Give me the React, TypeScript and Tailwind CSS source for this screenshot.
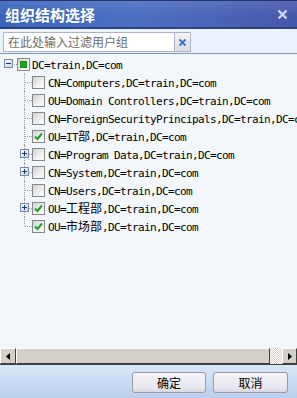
import React from 'react';

type Node = {
  label: string;
  state: 'none' | 'checked' | 'partial';
  expander?: 'plus' | 'minus';
};

const root: Node = { label: 'DC=train,DC=com', state: 'partial', expander: 'minus' };

const children: Node[] = [
  { label: 'CN=Computers,DC=train,DC=com', state: 'none' },
  { label: 'OU=Domain Controllers,DC=train,DC=com', state: 'none' },
  { label: 'CN=ForeignSecurityPrincipals,DC=train,DC=com', state: 'none' },
  { label: 'OU=IT部,DC=train,DC=com', state: 'checked' },
  { label: 'CN=Program Data,DC=train,DC=com', state: 'none', expander: 'plus' },
  { label: 'CN=System,DC=train,DC=com', state: 'none', expander: 'plus' },
  { label: 'CN=Users,DC=train,DC=com', state: 'none' },
  { label: 'OU=工程部,DC=train,DC=com', state: 'checked', expander: 'plus' },
  { label: 'OU=市场部,DC=train,DC=com', state: 'checked' },
];

// CJK runs get normal tracking, latin runs are squeezed to ~6px per char
function Label({ text }: { text: string }) {
  const parts = text.split(/([\u4e00-\u9fff]+)/).filter(Boolean);
  return (
    <span className="shrink-0 whitespace-pre text-[11px] tracking-[-0.62px] text-black">
      {parts.map((p, i) =>
        /[\u4e00-\u9fff]/.test(p) ? (
          <span key={i} className="text-[12px] tracking-normal">
            {p}
          </span>
        ) : (
          <span key={i}>{p}</span>
        )
      )}
    </span>
  );
}

function Expander({ kind }: { kind: 'plus' | 'minus' }) {
  return (
    <span className="w-[9px] h-[9px] border border-[#7a8aa6] bg-[linear-gradient(135deg,#ffffff,#c6d2e4)] flex items-center justify-center">
      <svg width="7" height="7" viewBox="0 0 7 7">
        <rect x="1" y="3" width="5" height="1" fill="#1d3a78" />
        {kind === 'plus' && <rect x="3" y="1" width="1" height="5" fill="#1d3a78" />}
      </svg>
    </span>
  );
}

function CheckBox({ state }: { state: Node['state'] }) {
  return (
    <span className="w-[13px] h-[13px] shrink-0 border border-[#878888] bg-[linear-gradient(135deg,#d2d2d2,#f0f0f0_60%,#fcfcfc)] flex items-center justify-center">
      {state === 'checked' && (
        <svg width="11" height="11" viewBox="0 0 11 11">
          <path d="M2 5.5 L4.5 8 L9 2.5" fill="none" stroke="#21a121" strokeWidth="2" />
        </svg>
      )}
      {state === 'partial' && <span className="w-[7px] h-[7px] bg-[#1fa31f] border border-[#178a17]" />}
    </span>
  );
}

function ChildRow({ node, last }: { node: Node; last: boolean }) {
  return (
    <div className="flex items-center h-[18px] w-max">
      <div className="w-[16px] h-full shrink-0" />
      <div className="relative w-[16px] h-full shrink-0">
        <span
          className={`absolute left-[8px] top-0 border-l border-dotted border-[#a0a0a0] ${last ? 'h-[9px]' : 'h-full'}`}
        />
        <span className="absolute left-[9px] top-[9px] w-[7px] border-t border-dotted border-[#a0a0a0]" />
        {node.expander && (
          <span className="absolute left-[4px] top-[4px]">
            <Expander kind={node.expander} />
          </span>
        )}
      </div>
      <CheckBox state={node.state} />
      <span className="ml-[3px] shrink-0">
        <Label text={node.label} />
      </span>
    </div>
  );
}

export default function App() {
  return (
    <div className="w-[297px] h-[398px] flex flex-col overflow-hidden bg-[#f3f7fc] font-['DejaVu_Sans_Mono','Noto_Sans_CJK_SC',monospace]">
      {/* title bar */}
      <div className="h-[29px] shrink-0 flex items-center justify-between px-[5px] border-t border-t-[#233468] border-b-2 border-b-[#2e4280] bg-[linear-gradient(180deg,rgba(255,255,255,0.10),rgba(255,255,255,0)_60%),linear-gradient(90deg,#3a64bb,#4c6fc3_45%,#4757ab)]">
        <span className="font-['Noto_Sans_CJK_SC',sans-serif] font-bold text-[15px] text-white leading-none">
          组织结构选择
        </span>
        <svg width="11" height="11" viewBox="0 0 11 11" className="mr-[4px]">
          <path d="M1.5 1.5 L9.5 9.5 M9.5 1.5 L1.5 9.5" stroke="#cfd6ee" strokeWidth="2.4" />
        </svg>
      </div>

      {/* filter row */}
      <div className="h-[25px] shrink-0 flex items-start pt-[3px] pl-[3px] bg-[#eaf2fc] border-b border-[#7f95b9]">
        <div className="w-[172px] h-[20px] bg-white border border-[#aab4c6] flex items-center pl-[4px]">
          <span className="font-['Noto_Sans_CJK_SC',sans-serif] text-[12px] text-[#6b6b6b] leading-none">
            在此处输入过滤用户组
          </span>
        </div>
        <div className="w-[16px] h-[20px] border border-l-0 border-[#aab4c6] bg-[linear-gradient(180deg,#f2f2f4,#dcdde2)] flex items-center justify-center">
          <svg width="9" height="9" viewBox="0 0 9 9">
            <path d="M1.5 1.5 L7.5 7.5 M7.5 1.5 L1.5 7.5" stroke="#3c78c4" strokeWidth="2" />
          </svg>
        </div>
      </div>

      {/* tree */}
      <div className="flex-1 overflow-hidden bg-[#f3f7fc] pt-[1px]">
        <div className="flex items-center h-[18px] w-max">
          <div className="relative w-[17px] h-full shrink-0">
            <span className="absolute left-[4px] top-[4px]">
              <Expander kind="minus" />
            </span>
            <span className="absolute left-[14px] top-[9px] w-[3px] border-t border-dotted border-[#a0a0a0]" />
          </div>
          <CheckBox state={root.state} />
          <span className="ml-[2px] shrink-0">
            <Label text={root.label} />
          </span>
        </div>
        {children.map((c, i) => (
          <ChildRow key={c.label} node={c} last={i === children.length - 1} />
        ))}
      </div>

      {/* horizontal scrollbar */}
      <div className="h-[17px] shrink-0 flex bg-[#d4d0c8] border-b border-[#404040]">
        <div className="w-[16px] h-[16px] border-t border-l border-t-white border-l-white border-r border-b border-r-[#404040] border-b-[#404040] flex items-center justify-center">
          <svg width="4" height="7" viewBox="0 0 4 7">
            <path d="M4 0 L0 3.5 L4 7 Z" fill="#000" />
          </svg>
        </div>
        <div className="w-[254px] h-[16px] border-t border-l border-t-white border-l-white border-r border-b border-r-[#404040] border-b-[#404040]" />
        <div className="flex-1 h-[16px] bg-[repeating-conic-gradient(#d4d0c8_0_25%,#ffffff_0_50%)] bg-[length:2px_2px]" />
        <div className="w-[15px] h-[16px] border-t border-l border-t-white border-l-white border-r border-b border-r-[#404040] border-b-[#404040] flex items-center justify-center">
          <svg width="4" height="7" viewBox="0 0 4 7">
            <path d="M0 0 L4 3.5 L0 7 Z" fill="#000" />
          </svg>
        </div>
      </div>

      {/* footer */}
      <div className="h-[33px] shrink-0 flex justify-end items-start pt-[7px] pr-[9px] gap-[7px] bg-[linear-gradient(180deg,#d9e8f8,#b9cfee)]">
        <button className="w-[74px] h-[21px] rounded-[3px] border border-[#9a9aa8] bg-[linear-gradient(180deg,#f4f4f8,#e6e6ee_80%,#d8d8e2)] font-['Noto_Sans_CJK_SC',sans-serif] text-[12px] text-black leading-none">
          确定
        </button>
        <button className="w-[75px] h-[21px] rounded-[3px] border border-[#9a9aa8] bg-[linear-gradient(180deg,#f4f4f8,#e6e6ee_80%,#d8d8e2)] font-['Noto_Sans_CJK_SC',sans-serif] text-[12px] text-black leading-none">
          取消
        </button>
      </div>
    </div>
  );
}
